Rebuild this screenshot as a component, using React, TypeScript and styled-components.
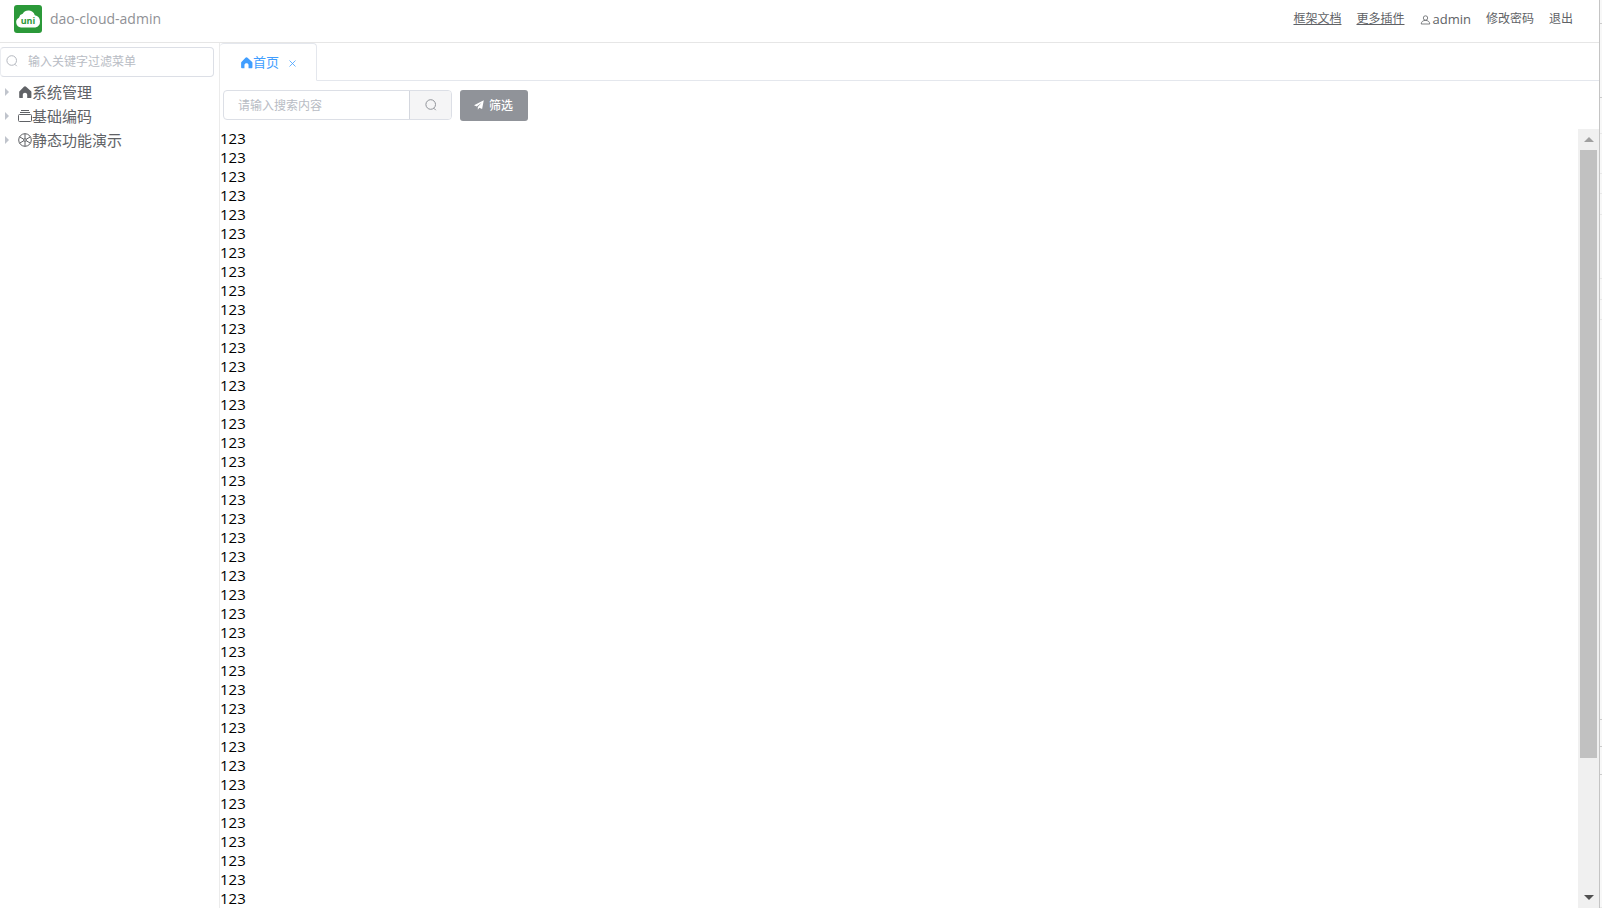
import React from "react";
import styled, { createGlobalStyle, css } from "styled-components";

const GlobalStyle = createGlobalStyle`
  *, *::before, *::after { box-sizing: border-box; }
  body {
    margin: 0;
    background: #fff;
    color: #606266;
    font-family: "Open Sans", "Noto Sans CJK SC", sans-serif;
    font-size: 12px;
  }
  button, input { font-family: inherit; margin: 0; }
  svg { display: block; flex: none; }
`;

const Page = styled.div`
  display: flex;
  height: 100vh;
  overflow: hidden;
`;

const Shell = styled.div`
  display: flex;
  flex-direction: column;
  flex: 1;
  min-width: 0;
`;

const Edge = styled.div`
  width: 3px;
  display: flex;
  flex-direction: column;
  border-left: 1px solid #c4c4c4;
  background: #f8f8f8;
`;

const EdgeCell = styled.div<{ $grow: number; $faint?: boolean }>`
  flex: ${(p) => p.$grow} 0 0;
  border-bottom: 1px solid ${(p) => (p.$faint ? "#e8e8e8" : "#ccc")};
`;

const Header = styled.header`
  display: flex;
  align-items: center;
  justify-content: space-between;
  height: 43px;
  padding: 0 26px 4px 14px;
  border-bottom: 1px solid #e6e6e6;
`;

const Brand = styled.div`
  display: flex;
  align-items: center;
  gap: 8px;
  font-size: 14px;
  line-height: 20px;
  color: #909196;
`;

const Nav = styled.nav`
  display: flex;
  align-items: center;
  gap: 15px;
`;

const navItem = css`
  display: flex;
  align-items: center;
  gap: 2px;
  padding: 0;
  border: 0;
  background: none;
  color: #606266;
  font-size: 12px;
  line-height: 18px;
`;

const NavLink = styled.a`
  ${navItem}
  text-decoration: underline;
`;

const NavButton = styled.button`
  ${navItem}
  cursor: pointer;
`;

const Account = styled.span`
  font-size: 13px;
`;

const Body = styled.div`
  display: flex;
  flex: 1;
  min-height: 0;
`;

const Sidebar = styled.aside`
  width: 220px;
  flex: none;
  padding: 4px 5px 0 0;
  border-right: 1px solid #ebebeb;
`;

const FilterBox = styled.label`
  display: flex;
  align-items: center;
  gap: 10px;
  height: 30px;
  padding: 0 6px 2px 5px;
  border: 1px solid #dcdfe6;
  border-left-color: #ebedf1;
  border-radius: 4px;
  color: #b4b8bf;
`;

const TextInput = styled.input`
  flex: 1;
  min-width: 0;
  height: 28px;
  padding: 0;
  border: 0;
  outline: 0;
  background: none;
  color: #606266;
  font-size: 12px;
  &::placeholder { color: #b8bcc4; opacity: 1; }
`;

const Tree = styled.ul`
  list-style: none;
  margin: 0;
  padding: 3px 0 0;
`;

const TreeRow = styled.button`
  display: flex;
  align-items: center;
  width: 100%;
  height: 24px;
  padding: 0 0 0 5px;
  border: 0;
  background: none;
  color: #606266;
  font-size: 15px;
  line-height: 24px;
  text-align: left;
  cursor: pointer;
`;

const Caret = styled.span`
  width: 13px;
  &::before {
    content: "";
    display: block;
    width: 0;
    border-left: 4px solid #c0c4cc;
    border-top: 4px solid transparent;
    border-bottom: 4px solid transparent;
  }
`;

const Main = styled.main`
  display: flex;
  flex-direction: column;
  flex: 1;
  min-width: 0;
`;

const TabBar = styled.div`
  display: flex;
  height: 38px;
  flex: none;
  border-bottom: 1px solid #e4e7ed;
`;

const Tab = styled.div`
  display: flex;
  align-items: center;
  height: 38px;
  padding: 0 19px 0 20px;
  border: 1px solid #e4e7ed;
  border-bottom-color: #fff;
  border-left: 0;
  border-radius: 4px 4px 0 0;
  background: #fff;
  color: #409eff;
`;

const TabLabel = styled.button`
  display: flex;
  align-items: center;
  padding: 0;
  border: 0;
  background: none;
  color: inherit;
  font-size: 13px;
  line-height: 20px;
`;

const TabClose = styled.button`
  margin-left: 9px;
  padding: 2px 0 0;
  border: 0;
  background: none;
  color: inherit;
`;

const Toolbar = styled.form`
  display: flex;
  align-items: center;
  gap: 8px;
  height: 48px;
  flex: none;
  padding-left: 3px;
`;

const SearchGroup = styled.div`
  display: flex;
  width: 229px;
  height: 30px;
  padding-left: 14px;
  border: 1px solid #dcdfe6;
  border-radius: 4px;
  overflow: hidden;
`;

const SearchButton = styled.button`
  display: flex;
  align-items: center;
  justify-content: center;
  width: 42px;
  padding: 0;
  border: 0;
  border-left: 1px solid #d4d7de;
  background: #f5f5f6;
  color: #909399;
`;

const FilterButton = styled.button`
  display: flex;
  align-items: center;
  gap: 5px;
  height: 31px;
  padding: 0 15px 0 14px;
  border: 0;
  border-radius: 3px;
  background: #909399;
  color: #fff;
  font-size: 12px;
  font-weight: 500;
`;

const ScrollArea = styled.div`
  display: flex;
  flex: 1;
  min-height: 0;
`;

const Lines = styled.div`
  flex: 1;
  overflow: auto;
  scrollbar-width: none;
  color: #000;
  font-size: 15px;
  line-height: 19px;
`;

const ScrollBar = styled.div`
  display: flex;
  flex-direction: column;
  width: 21px;
  padding: 0 2px;
  background: #f0f0f0;
`;

const ScrollArrow = styled.span<{ $down?: boolean }>`
  display: flex;
  align-items: center;
  justify-content: center;
  height: 21px;
  flex: none;
  &::before {
    content: "";
    border-left: 5px solid transparent;
    border-right: 5px solid transparent;
    ${(p) => (p.$down ? "border-top: 5px solid #505050;" : "border-bottom: 5px solid #a0a0a0;")}
  }
`;

const ScrollTrack = styled.div`
  flex: 1;
`;

const ScrollThumb = styled.div`
  height: 82.5%;
  background: #c1c1c1;
`;

const LogoIcon = () => (
  <svg width="28" height="28" viewBox="0 0 28 28" role="img" aria-label="uni">
    <rect width="28" height="28" rx="3" fill="#2b9939" />
    <path d="M7 22.500a5.200 5.200 0 0 1-2-9.800A5 5 0 0 1 8.700 8.800 6.700 6.700 0 0 1 20.800 10.200a6.300 6.300 0 0 1 .5 12.300z" fill="#fff" />
    <text x="14" y="18.800" textAnchor="middle" fontFamily="Open Sans, sans-serif" fontWeight="700" fontSize="9" fill="#2b9939">uni</text>
  </svg>
);

const SearchIcon = () => (
  <svg width="12" height="12" viewBox="0 0 12 12" fill="none" stroke="currentColor">
    <circle cx="5.700" cy="5.500" r="4.800" />
    <path d="M8.800 9.200l2 2" />
  </svg>
);

const HomeIcon = ({ size }: { size: number }) => (
  <svg width={size} height={size} viewBox="0 0 14 14" fill="currentColor">
    <path d="M7 1.300c.4 0 .8.200 1.100.5l4.700 4.300c.6.500.6.900.600 1.500v4.600c0 .6-.3.900-.9.900H9.200V9.800c0-2.700-4.400-2.700-4.400 0v3.300H2.100c-.6 0-.9-.3-.9-.9V7.600c0-.6 0-1 .6-1.500l4.100-4.300c.3-.3.700-.5 1.100-.5z" />
  </svg>
);

const BoxIcon = () => (
  <svg width="14" height="14" viewBox="0 0 14 14" fill="none" stroke="currentColor">
    <path d="M3 1.500h8M2 3.500h10" />
    <rect x=".5" y="5.500" width="13" height="7" rx="1" />
  </svg>
);

const WheelIcon = () => (
  <svg width="14" height="14" viewBox="0 0 14 14" fill="none" stroke="currentColor">
    <circle cx="7" cy="7" r="6.300" />
    <circle cx="7" cy="7" r="1.300" />
    <path d="M7 .7v5M7 8.300v5M1.500 3.800l4.400 2.500M8.100 7.700l4.400 2.500M12.500 3.800L8.100 6.300M5.900 7.700l-4.400 2.500" />
  </svg>
);

const UserIcon = () => (
  <svg width="11" height="11" viewBox="0 0 11 11" fill="none" stroke="currentColor" strokeWidth=".8">
    <circle cx="5.500" cy="4" r="2.200" />
    <path d="M1.200 10c.2-2.400 1.800-3.600 4.300-3.600S9.600 7.600 9.800 10z" />
  </svg>
);

const CloseIcon = () => (
  <svg width="9" height="9" viewBox="0 0 9 9" fill="none" stroke="currentColor" strokeWidth=".8">
    <path d="M1.500 1.500l6 6M7.500 1.500l-6 6" />
  </svg>
);

const PlaneIcon = () => (
  <svg width="10" height="10" viewBox="0 0 10 10" fill="currentColor">
    <path d="M9.800.2L0 5.300l2.700 1.200L7.600 2.700 3.800 7v2.800l1.500-2 2.800 1.200z" />
  </svg>
);

const menu = [
  { label: "系统管理", icon: <HomeIcon size={14} /> },
  { label: "基础编码", icon: <BoxIcon /> },
  { label: "静态功能演示", icon: <WheelIcon /> },
];

const lines = Array.from({ length: 41 }, () => "123");

const edgeCells = [
  { grow: 23 },
  { grow: 74 },
  { grow: 36, faint: true },
  { grow: 39, faint: true },
  { grow: 20, faint: true },
  { grow: 20, faint: true },
  { grow: 64, faint: true },
  { grow: 20, faint: true },
  { grow: 20, faint: true },
  { grow: 404 },
  { grow: 27 },
  { grow: 27 },
  { grow: 134, faint: true },
];

export default function App() {
  return (
    <Page>
      <GlobalStyle />
      <Shell>
        <Header>
          <Brand>
            <LogoIcon />
            <span>dao-cloud-admin</span>
          </Brand>
          <Nav>
            <NavLink href="#docs">框架文档</NavLink>
            <NavLink href="#plugins">更多插件</NavLink>
            <NavButton type="button"><UserIcon /><Account>admin</Account></NavButton>
            <NavButton type="button">修改密码</NavButton>
            <NavButton type="button">退出</NavButton>
          </Nav>
        </Header>
        <Body>
          <Sidebar>
            <FilterBox>
              <SearchIcon />
              <TextInput type="text" placeholder="输入关键字过滤菜单" />
            </FilterBox>
            <Tree>
              {menu.map((item) => (
                <li key={item.label}>
                  <TreeRow type="button">
                    <Caret />
                    {item.icon}
                    {item.label}
                  </TreeRow>
                </li>
              ))}
            </Tree>
          </Sidebar>
          <Main>
            <TabBar>
              <Tab>
                <TabLabel type="button"><HomeIcon size={13} />首页</TabLabel>
                <TabClose type="button" aria-label="关闭"><CloseIcon /></TabClose>
              </Tab>
            </TabBar>
            <Toolbar onSubmit={(e) => e.preventDefault()}>
              <SearchGroup>
                <TextInput type="text" placeholder="请输入搜索内容" aria-label="请输入搜索内容" />
                <SearchButton type="submit" aria-label="搜索"><SearchIcon /></SearchButton>
              </SearchGroup>
              <FilterButton type="button"><PlaneIcon />筛选</FilterButton>
            </Toolbar>
            <ScrollArea>
              <Lines>
                {lines.map((text, i) => <div key={i}>{text}</div>)}
              </Lines>
              <ScrollBar aria-hidden="true">
                <ScrollArrow />
                <ScrollTrack><ScrollThumb /></ScrollTrack>
                <ScrollArrow $down />
              </ScrollBar>
            </ScrollArea>
          </Main>
        </Body>
      </Shell>
      <Edge aria-hidden="true">
        {edgeCells.map((cell, i) => <EdgeCell key={i} $grow={cell.grow} $faint={cell.faint} />)}
      </Edge>
    </Page>
  );
}
